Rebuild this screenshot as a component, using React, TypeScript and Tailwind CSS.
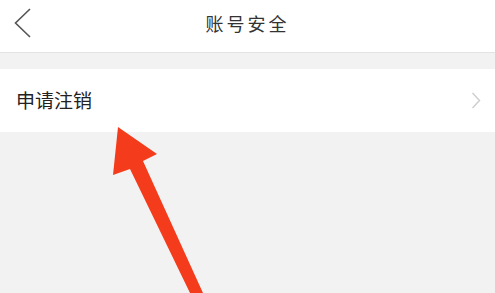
import React from 'react';

const font = { fontFamily: '"Noto Sans CJK SC", "Noto Sans", sans-serif' };

export default function App() {
  return (
    <div className="relative h-[293px] w-[495px] overflow-hidden bg-[#f2f2f2]" style={font}>
      <header className="relative flex h-[53px] items-center justify-center border-b border-[#e3e3e3] bg-white">
        <button className="absolute left-[12px] top-[6px] h-[34px] w-[22px]">
          <svg width="22" height="34" viewBox="0 0 22 34" fill="none">
            <path d="M18 3 L3.5 17 L18 31" stroke="#555" strokeWidth="1.6" />
          </svg>
        </button>
        <h1 className="mb-[5px] text-[18px] tracking-[3px] text-[#333]">账号安全</h1>
      </header>

      <div className="mt-[16px] flex h-[63px] items-center justify-between bg-white pl-[16px] pr-[14px]">
        <span className="text-[19px] text-[#222]">申请注销</span>
        <svg width="10" height="17" viewBox="0 0 10 17" fill="none">
          <path d="M1.5 1 L8.5 8.5 L1.5 16" stroke="#cfcfcf" strokeWidth="1.5" />
        </svg>
      </div>

      <svg className="pointer-events-none absolute left-0 top-0" width="495" height="293" viewBox="0 0 495 293">
        <polygon
          points="118,127 113,175 130,169 190,293 203,293 143,161 157,154"
          fill="#f43c1c"
        />
      </svg>
    </div>
  );
}
